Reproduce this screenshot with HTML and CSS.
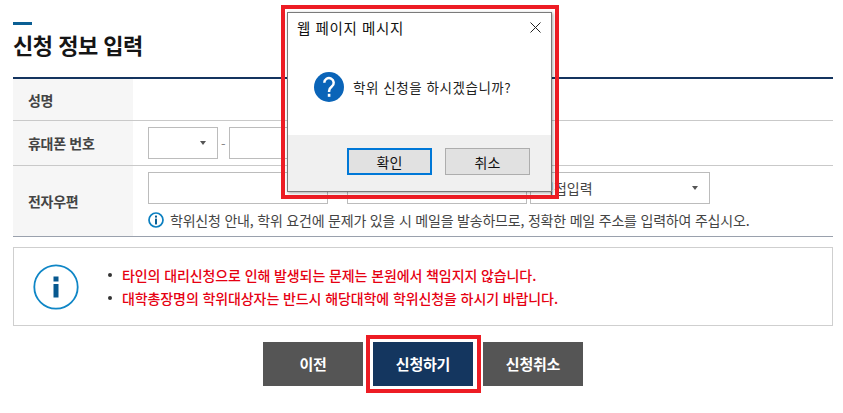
FILE: index.html
```html
<!DOCTYPE html>
<html lang="ko">
<head>
<meta charset="utf-8">
<title>신청 정보 입력</title>
<link rel="stylesheet" href="styles.css">
</head>
<body>
<main class="page">
  <div class="title-mark"></div>
  <h1 class="title">신청 정보 입력</h1>
  <section class="form">
    <div class="row row-name">
      <div class="label">성명</div>
      <div class="cell"></div>
    </div>
    <div class="row row-phone">
      <div class="label">휴대폰 번호</div>
      <div class="cell phone">
        <div class="field select sel-phone"><span class="caret"></span></div>
        <span class="dash">-</span>
        <div class="field in-phone"></div>
      </div>
    </div>
    <div class="row row-mail">
      <div class="label">전자우편</div>
      <div class="cell mail">
        <div class="mail-fields">
          <div class="field in-mail"></div>
          <div class="field in-domain"></div>
          <div class="field select sel-domain"><span class="sel-text">직접입력</span><span class="caret"></span></div>
        </div>
        <p class="hint">
          <svg class="hint-icon" viewBox="0 0 16 16" width="16" height="16" aria-hidden="true">
            <circle cx="8" cy="8" r="7" fill="none" stroke="#0b7fc0" stroke-width="1.7"/>
            <rect x="7" y="3.6" width="2" height="2" fill="#0b5f94"/>
            <rect x="7" y="6.6" width="2" height="5.8" fill="#0b5f94"/>
          </svg>
          학위신청 안내, 학위 요건에 문제가 있을 시 메일을 발송하므로, 정확한 메일 주소를 입력하여 주십시오.
        </p>
      </div>
    </div>
  </section>
  <section class="notice">
    <svg class="notice-icon" viewBox="0 0 46 46" width="46" height="46" aria-hidden="true">
      <circle cx="23" cy="23" r="21.7" fill="none" stroke="#0f86c6" stroke-width="1.8"/>
      <rect x="20.5" y="12.5" width="5" height="5" fill="#07588f"/>
      <rect x="20.5" y="20" width="5" height="13.5" fill="#07588f"/>
    </svg>
    <ul class="notice-list">
      <li><span>타인의 대리신청으로 인해 발생되는 문제는 본원에서 책임지지 않습니다.</span></li>
      <li><span>대학총장명의 학위대상자는 반드시 해당대학에 학위신청을 하시기 바랍니다.</span></li>
    </ul>
  </section>
  <div class="actions">
    <button class="btn">이전</button>
    <button class="btn primary">신청하기</button>
    <button class="btn">신청취소</button>
  </div>
</main>

<div class="mark mark-dialog"></div>
<div class="mark mark-button"></div>

<div class="dialog" role="dialog">
  <div class="dlg-head">
    <span class="dlg-title">웹 페이지 메시지</span>
    <svg class="dlg-close" viewBox="0 0 11 11" width="11" height="11" aria-hidden="true">
      <path d="M.5.5l10 10M10.5.5l-10 10" fill="none" stroke="#222" stroke-width="1"/>
    </svg>
  </div>
  <div class="dlg-body">
    <svg class="dlg-icon" viewBox="0 0 30 30" width="30" height="30" aria-hidden="true">
      <circle cx="15" cy="15" r="15" fill="#0a64b8"/>
      <path d="M10.300 10.800a4.700 4.700 0 1 1 7.500 3.700c-1.700 1.300-2.700 2.200-2.700 4.400v1.100" fill="none" stroke="#fff" stroke-width="2.500"/>
      <rect x="13.800" y="21.800" width="2.600" height="3" fill="#fff"/>
    </svg>
    <span class="dlg-msg">학위 신청을 하시겠습니까?</span>
  </div>
  <div class="dlg-foot">
    <button class="dlg-btn default">확인</button>
    <button class="dlg-btn">취소</button>
  </div>
</div>
</body>
</html>
```
FILE: styles.css
```css
* { box-sizing: border-box; }
html, body { margin: 0; padding: 0; background: #fff; }
body {
  width: 843px;
  height: 413px;
  overflow: hidden;
  position: relative;
  font-family: "Noto Sans CJK KR", "Noto Sans", sans-serif;
  color: #333;
}
.page { padding: 22px 10px 0 13px; }
.title-mark { width: 19px; height: 3px; background: #0b5f94; }
.title {
  margin: 4px 0 0;
  height: 48px;
  font-size: 22px;
  line-height: 30px;
  font-weight: 700;
  color: #151515;
  letter-spacing: -0.5px;
}
.form { border-top: 2px solid #14345f; border-bottom: 1px solid #9aa1ad; }
.row { display: flex; border-bottom: 1px solid #c9c9c9; }
.row:last-child { border-bottom: 0; }
.row-name { height: 42px; }
.row-phone { height: 45px; }
.row-mail { height: 70px; }
.label {
  width: 120px;
  flex: none;
  background: #f6f6f6;
  padding-left: 15px;
  display: flex;
  align-items: center;
  font-size: 14px;
  font-weight: 700;
  color: #444;
  letter-spacing: -0.3px;
}
.cell { flex: 1; padding-left: 15px; }
.phone { display: flex; align-items: center; gap: 3px; }
.dash { color: #888; font-size: 13px; width: 5px; }
.field {
  height: 32px;
  border: 1px solid #bcbcbc;
  background: #fff;
  display: flex;
  align-items: center;
  justify-content: flex-end;
  position: relative;
}
.sel-phone { width: 70px; padding-right: 11px; }
.in-phone { width: 250px; }
.caret {
  width: 0;
  height: 0;
  border-left: 3.5px solid transparent;
  border-right: 3.5px solid transparent;
  border-top: 4px solid #555;
}
.mail { padding-top: 6px; }
.mail-fields { display: flex; }
.in-mail { width: 180px; margin-right: 19px; }
.in-domain { width: 180px; margin-right: 3px; }
.sel-domain { width: 180px; padding-right: 11px; justify-content: space-between; padding-left: 10px; }
.sel-text { font-size: 14px; color: #444; }
.hint {
  margin: 6px 0 0;
  font-size: 14px;
  line-height: 20px;
  color: #444;
  display: flex;
  align-items: center;
  gap: 6px;
  white-space: nowrap;
  letter-spacing: -0.2px;
}
.hint-icon { flex: none; }
.notice {
  margin-top: 10px;
  height: 79px;
  border: 1px solid #cfcfcf;
  display: flex;
  align-items: center;
  padding-left: 19px;
}
.notice-icon { flex: none; }
.notice-list {
  list-style: none;
  margin: 0 0 0 29px;
  padding: 0;
  font-size: 14px;
  font-weight: 500;
  line-height: 23px;
  color: #e60012;
  letter-spacing: -0.1px;
}
.notice-list li { display: flex; align-items: center; gap: 10px; white-space: nowrap; }
.notice-list li::before {
  content: "";
  width: 4px;
  height: 4px;
  border-radius: 50%;
  background: #333;
  flex: none;
}
.actions { margin-top: 16px; display: flex; justify-content: center; gap: 10px; width: 820px; }
.btn {
  width: 100px;
  height: 44px;
  border: 0;
  background: #555;
  color: #fff;
  font: 700 15px "Noto Sans CJK KR", sans-serif;
  letter-spacing: -0.2px;
  padding: 0 0 2px;
}
.btn.primary { background: #14365f; }
.mark { position: absolute; border: 4px solid #ed1c24; }
.mark-dialog { left: 281px; top: 5px; width: 278px; height: 194px; }
.mark-button { left: 366px; top: 335px; width: 115px; height: 58px; }
.dialog {
  position: absolute;
  left: 287px;
  top: 12px;
  width: 265px;
  height: 180px;
  background: #fff;
  border: 1px solid #7a7a7a;
  box-shadow: 1px 1px 3px rgba(0, 0, 0, .35);
  display: flex;
  flex-direction: column;
  color: #111;
}
.dlg-head {
  height: 30px;
  flex: none;
  display: flex;
  align-items: center;
  justify-content: space-between;
  padding: 0 10px 2px 9px;
}
.dlg-title { font-size: 14.500px; letter-spacing: .6px; }
.dlg-body {
  flex: 1;
  display: flex;
  align-items: center;
  padding: 0 0 5px 26px;
  gap: 9px;
}
.dlg-msg { font-size: 13.500px; letter-spacing: .55px; color: #222; }
.dlg-foot {
  height: 56px;
  flex: none;
  background: #f0f0f0;
  display: flex;
  gap: 13px;
  padding: 13px 0 0 59px;
}
.dlg-btn {
  width: 85px;
  height: 27px;
  background: #e1e1e1;
  border: 1px solid #adadad;
  font: 400 14px "Noto Sans CJK KR", sans-serif;
  color: #111;
  padding: 0;
}
.dlg-btn.default { border: 2px solid #0078d7; }
```
